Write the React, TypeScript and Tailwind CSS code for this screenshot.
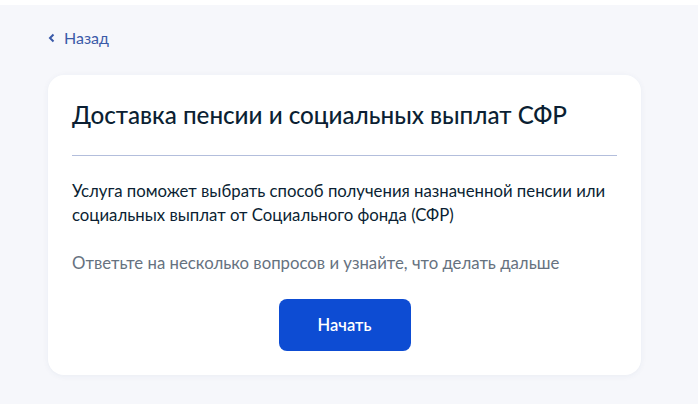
import React from 'react';

const App = () => {
  return (
    <div className="w-[698px] h-[404px] bg-[#f6f7fb] font-['Lato','Noto_Sans',sans-serif] overflow-hidden">
      <div className="h-[5px] bg-white" />
      <div className="px-12 pt-[23px]">
        <a className="flex items-center gap-[9px] text-[16px] leading-5 text-[#3a5aa8] h-5">
          <svg width="7" height="10" viewBox="0 0 7 10" fill="none">
            <path d="M5.5 1.5L2 5l3.5 3.5" stroke="#3a5aa8" strokeWidth="2" />
          </svg>
          Назад
        </a>
        <div className="mt-[27px] w-[593px] bg-white rounded-2xl px-6 pt-6 pb-6 shadow-[0_1px_6px_rgba(40,60,120,0.06)]">
          <h1 className="text-[24.2px] leading-8 font-medium text-[#0b1f33]">
            Доставка пенсии и социальных выплат СФР
          </h1>
          <div className="mt-6 h-px bg-[#b3bedc]" />
          <p className="mt-[23px] text-[16.75px] leading-[24px] text-[#0b1f33]">
            Услуга поможет выбрать способ получения назначенной пенсии или социальных выплат от Социального фонда (СФР)
          </p>
          <p className="mt-6 text-[16.75px] leading-[24px] text-[#66727f]">
            Ответьте на несколько вопросов и узнайте, что делать дальше
          </p>
          <div className="mt-6 flex justify-center">
            <button className="w-[132px] h-[52px] rounded-lg bg-[#0d4cd3] text-white text-[16.5px] font-semibold">
              Начать
            </button>
          </div>
        </div>
      </div>
    </div>
  );
};

export default App;
